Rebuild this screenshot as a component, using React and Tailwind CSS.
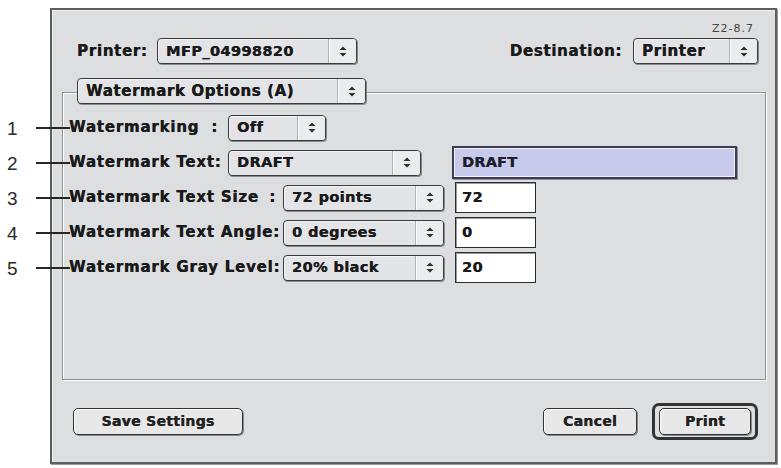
import React from "react";

const F = "[font-family:'DejaVu_Sans',sans-serif]";
const HEAVY = "[text-shadow:0.35px_0_0_currentColor]";

function Arrows() {
  return (
    <svg width="8" height="11" viewBox="0 0 8 11">
      <path d="M4 0.5 L7.5 4 L0.5 4 Z M0.5 7 L7.5 7 L4 10.5 Z" fill="#2e2e2e" />
    </svg>
  );
}

function Popup({ className = "", text, big = false }) {
  return (
    <div
      className={`flex h-[26px] shrink-0 rounded-[4px] border border-[#3a3a3a] bg-[#e3e4e7] shadow-[1px_1px_0_#8a8a8a,inset_1px_1px_0_#f4f4f4] ${className}`}
    >
      <div
        className={`flex flex-1 items-center pl-[8px] font-bold leading-none text-[#1a1a1a] ${HEAVY} ${
          big ? "text-[15px] tracking-[0.6px]" : "text-[14.5px] tracking-[0.4px]"
        }`}
      >
        {text}
      </div>
      <div className="flex w-[28px] items-center justify-center rounded-r-[3px] border-l border-[#b4b4b4] bg-[#ebecee] shadow-[inset_1px_0_0_#fafafa]">
        <Arrows />
      </div>
    </div>
  );
}

function Field({ className = "", text }) {
  return (
    <div
      className={`flex shrink-0 items-center border border-[#2c2c2c] bg-white pl-[6px] text-[14.5px] font-bold tracking-[0.4px] text-[#1a1a1a] ${HEAVY} shadow-[inset_1px_1px_0_#9a9a9a] ${className}`}
    >
      {text}
    </div>
  );
}

function Annot({ n }) {
  return (
    <>
      <span className="absolute left-[-62px] top-1/2 -translate-y-1/2 [font-family:'Liberation_Sans',sans-serif] text-[19px] font-normal leading-none tracking-normal text-[#2a2a2a] [text-shadow:none]">
        {n}
      </span>
      <span className="absolute left-[-33px] top-1/2 h-[2px] w-[34px] -translate-y-1/2 bg-[#262626]" />
    </>
  );
}

function Button({ className = "", children }) {
  return (
    <div
      className={`flex h-[27px] shrink-0 items-center justify-center rounded-[5px] border-[1.5px] border-[#333] bg-[#e8e8e9] text-[14px] font-bold tracking-[0.3px] text-[#222] ${HEAVY} shadow-[1px_1px_0_#8a8a8a,inset_1px_1px_0_#fbfbfb] ${className}`}
    >
      {children}
    </div>
  );
}

export default function App() {
  return (
    <div className={`h-[468px] w-[781px] overflow-hidden bg-white pl-[50px] pt-[8px] ${F}`}>
      <div className="flex h-[456px] w-[727px] flex-col border-2 border-[#5e5e5e] bg-[#dcdee0] shadow-[1px_1px_0_#9a9a9a,inset_1px_1px_0_#eef0f1]">
        {/* version tag */}
        <div className="flex h-[28px] items-end justify-end pb-[4px] pr-[21px] text-[11px] leading-none tracking-[1px] text-[#444]">
          Z2-8.7
        </div>

        {/* header row */}
        <div className={`flex h-[28px] items-start pl-[25px] pr-[17px] text-[15px] font-bold tracking-[0.7px] text-[#1a1a1a] ${HEAVY}`}>
          <div className="flex h-[26px] w-[80px] items-center">Printer:</div>
          <Popup className="w-[200px]" text="MFP_04998820" />
          <div className="flex-1" />
          <div className="flex h-[26px] items-center pr-[11px]">Destination:</div>
          <Popup className="w-[125px]" text="Printer" big />
        </div>

        {/* group box */}
        <div className="ml-[10px] mr-[9px] mt-[26px] flex h-[288px] flex-col border border-[#8e8e8e] pl-[6px] shadow-[1px_1px_0_#ffffff,inset_1px_1px_0_#ffffff]">
          <Popup className="-mt-[15px] ml-[8px] w-[289px]" text="Watermark Options (A)" big />

          <div className={`mt-[6px] flex flex-col text-[15px] font-bold tracking-[0.8px] text-[#1a1a1a] ${HEAVY}`}>
            <div className="relative flex h-[35px] items-center">
              <Annot n="1" />
              <div className="flex w-[159px] justify-between pr-[10px]">
                <span>Watermarking</span>
                <span>:</span>
              </div>
              <Popup className="w-[98px]" text="Off" />
            </div>

            <div className="relative flex h-[35px] items-center">
              <Annot n="2" />
              <div className="w-[159px]">Watermark Text:</div>
              <Popup className="w-[193px]" text="DRAFT" />
              <div className="ml-[31px] flex h-[33px] w-[285px] items-center border-2 border-[#3c3c58] bg-[#c6c9e9] pl-[8px] text-[14.5px] font-bold tracking-[0.2px] text-[#1e1e2e] shadow-[inset_1px_1px_0_#f2f2fa,inset_-1px_-1px_0_#f2f2fa,1px_1px_0_#8f8f9f]">
                DRAFT
              </div>
            </div>

            <div className="relative flex h-[35px] items-center">
              <Annot n="3" />
              <div className="flex w-[214px] justify-between pr-[7px]">
                <span>Watermark Text Size</span>
                <span>:</span>
              </div>
              <Popup className="w-[161px]" text="72 points" />
              <Field className="ml-[11px] h-[31px] w-[81px]" text="72" />
            </div>

            <div className="relative flex h-[35px] items-center">
              <Annot n="4" />
              <div className="w-[214px]">Watermark Text Angle:</div>
              <Popup className="w-[161px]" text="0 degrees" />
              <Field className="ml-[11px] h-[31px] w-[81px]" text="0" />
            </div>

            <div className="relative flex h-[35px] items-center">
              <Annot n="5" />
              <div className="w-[214px]">Watermark Gray Level:</div>
              <Popup className="w-[161px]" text="20% black" />
              <Field className="ml-[11px] h-[31px] w-[81px]" text="20" />
            </div>
          </div>
        </div>

        {/* buttons */}
        <div className="mt-[23px] flex h-[37px] items-center pl-[21px] pr-[17px]">
          <Button className="w-[170px]">Save Settings</Button>
          <div className="flex-1" />
          <Button className="w-[94px]">Cancel</Button>
          <div className="ml-[15px] flex h-[37px] w-[106px] items-center justify-center rounded-[7px] border-[3px] border-[#333] bg-[#dcdee0]">
            <Button className="w-[92px]">Print</Button>
          </div>
        </div>
      </div>
    </div>
  );
}
